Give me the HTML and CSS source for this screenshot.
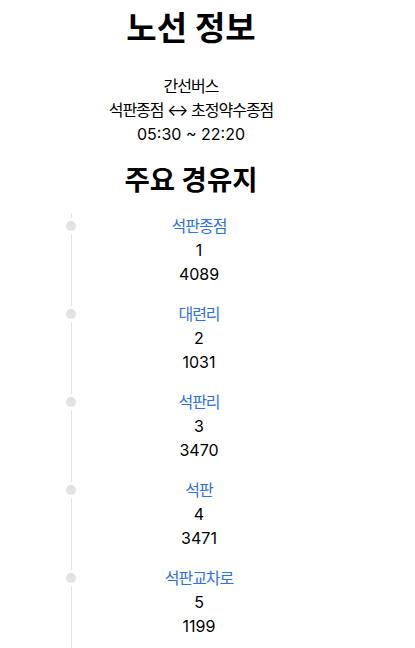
FILE: index.html
```html
<!DOCTYPE html>
<html lang="ko">
<head>
<meta charset="utf-8">
<title>노선 정보</title>
<link rel="stylesheet" href="styles.css">
</head>
<body>
<main class="page">
  <header class="route">
    <h1 class="route-title">노선 정보</h1>
    <div class="route-info">
      <p class="route-line ko">간선버스</p>
      <p class="route-line ko">석판종점 ↔ 초정약수종점</p>
      <p class="route-line">05:30 ~ 22:20</p>
    </div>
  </header>
  <section class="stops-section">
    <h2 class="stops-title">주요 경유지</h2>
    <ol class="stops">
      <li class="stop">
        <span class="stop-name ko">석판종점</span>
        <span class="stop-seq">1</span>
        <span class="stop-id">4089</span>
      </li>
      <li class="stop">
        <span class="stop-name ko">대련리</span>
        <span class="stop-seq">2</span>
        <span class="stop-id">1031</span>
      </li>
      <li class="stop">
        <span class="stop-name ko">석판리</span>
        <span class="stop-seq">3</span>
        <span class="stop-id">3470</span>
      </li>
      <li class="stop">
        <span class="stop-name ko">석판</span>
        <span class="stop-seq">4</span>
        <span class="stop-id">3471</span>
      </li>
      <li class="stop">
        <span class="stop-name ko">석판교차로</span>
        <span class="stop-seq">5</span>
        <span class="stop-id">1199</span>
      </li>
    </ol>
  </section>
</main>
</body>
</html>
```

FILE: styles.css
```css
html, body {
  margin: 0;
  padding: 0;
  background: #ffffff;
}

body {
  font-family: Inter, "Noto Sans CJK KR", sans-serif;
  font-size: 16px;
  color: #000000;
  overflow: hidden;
}

.page {
  width: 415px;
}

.ko {
  letter-spacing: -1px;
}

.route {
  padding-right: 33px;
  text-align: center;
}

.route-title {
  margin: 0;
  padding-top: 8px;
  font-size: 33px;
  line-height: 40px;
  font-weight: 700;
}

.route-info {
  margin-top: 26px;
}

.route-line {
  margin: 0;
  line-height: 24px;
}

.stops-section {
  margin-top: 17px;
}

.stops-title {
  margin: 0 33px 17px 0;
  text-align: center;
  font-size: 27.5px;
  line-height: 34px;
  font-weight: 700;
}

.stops {
  list-style: none;
  margin: 0 89px 0 71px;
  padding: 0 0 24px 0;
  border-left: 1px solid #e4e4e9;
  display: flex;
  flex-direction: column;
  gap: 16px;
}

.stop {
  position: relative;
  display: flex;
  flex-direction: column;
  align-items: center;
  line-height: 24px;
}

.stop::before {
  content: "";
  position: absolute;
  left: -6px;
  top: 7px;
  width: 10px;
  height: 10px;
  border-radius: 50%;
  background: #e1e1e6;
  box-shadow: 0 0 0 3px #ffffff;
}

.stop-name {
  color: #2f6fe8;
}
```
